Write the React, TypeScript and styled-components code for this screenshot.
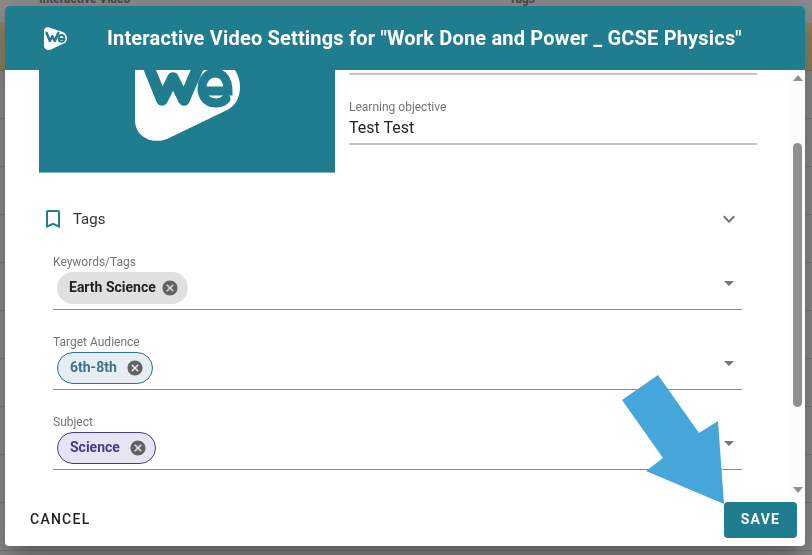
import React from "react";
import styled, { createGlobalStyle } from "styled-components";

const Global = createGlobalStyle`
  html, body { margin: 0; padding: 0; width: 812px; height: 555px; overflow: hidden; background: #8d8d8d; }
  * { box-sizing: border-box; }
  body { font-family: Roboto, "Liberation Sans", sans-serif; }
`;

const Page = styled.div`
  width: 812px;
  height: 555px;
  overflow: hidden;
  background: #8c8c8c;
`;
const PageHead = styled.div`
  display: flex;
  padding-left: 39px;
  font-size: 12px;
  font-weight: 700;
  color: #4a4a4a;
  line-height: 14px;
  margin-top: -8px;
  height: 31px;
`;
const HeadCell = styled.span<{ $w: number }>`
  width: ${(p) => p.$w}px;
`;
const Band = styled.div`
  height: 48px;
  background: #8e8364;
  border-bottom: 1px solid #7d7660;
`;
const PageRow = styled.div`
  height: 48px;
  border-bottom: 1px solid #7b7b7b;
`;

const Dialog = styled.div`
  position: fixed;
  left: 5px;
  top: 6px;
  width: 800px;
  height: 540px;
  display: flex;
  flex-direction: column;
  background: #fff;
  border-radius: 4px;
  overflow: hidden;
  box-shadow: 0 11px 15px -7px rgba(0,0,0,.2), 0 24px 38px 3px rgba(0,0,0,.14), 0 9px 46px 8px rgba(0,0,0,.12);
`;
const Header = styled.header`
  flex: 0 0 64px;
  display: flex;
  align-items: center;
  background: #1f7d8f;
  padding-left: 39px;
`;
const Title = styled.h2`
  margin: 0 0 0 40px;
  font-size: 20px;
  font-weight: 700;
  letter-spacing: 0.18px;
  line-height: 24px;
  color: #fff;
  white-space: nowrap;
`;
const Body = styled.div`
  flex: 0 0 427px;
  display: flex;
  min-height: 0;
`;
const Content = styled.div`
  flex: 1;
  overflow: hidden;
`;
const MediaRow = styled.div`
  display: flex;
  align-items: flex-start;
  padding-left: 34px;
  gap: 14px;
`;
const Poster = styled.div`
  flex: 0 0 296px;
  height: 167px;
  margin-top: -64px;
  display: flex;
  align-items: center;
  justify-content: center;
  background: #1f7d8f;
  border-bottom: 1px solid #79b3be;
  padding-bottom: 1px;
`;
const InfoColumn = styled.div`
  width: 408px;
  display: flex;
  flex-direction: column;
`;
const TopRule = styled.div`
  height: 5px;
  border-bottom: 2px solid #c4c4c4;
`;
const TextField = styled.div`
  margin-top: 25px;
  border-bottom: 2px solid #c4c4c4;
  padding-bottom: 3px;
`;
const FieldLabel = styled.div`
  font-size: 12px;
  line-height: 14px;
  color: #757575;
`;
const FieldValue = styled.div`
  font-size: 16px;
  line-height: 24px;
  margin-top: 2px;
  color: #222;
`;
const AccordionHead = styled.div`
  margin: 22px 0 0 36px;
  width: 700px;
  height: 48px;
  display: flex;
  align-items: center;
  color: #333;
  font-size: 15px;
`;
const AccordionText = styled.span`
  margin-left: 8px;
  flex: 1;
`;
const TagFields = styled.div`
  margin: 12px 0 0 48px;
  width: 689px;
  display: flex;
  flex-direction: column;
  gap: 25px;
`;
const SelectField = styled.div`
  position: relative;
  border-bottom: 1px solid #8a8a8a;
  padding-bottom: 5px;
`;
const ChipRow = styled.div`
  margin: 3px 0 0 4px;
  display: flex;
`;
const chipColors = {
  grey: { bg: "#e0e0e0", bd: "transparent", fg: "#222222", gap: 5, left: 11 },
  teal: { bg: "#e6eef3", bd: "#2f7186", fg: "#3f7288", gap: 9, left: 12 },
  purple: { bg: "#e7e5f3", bd: "#463a8c", fg: "#463a8c", gap: 9, left: 12 },
};
const Chip = styled.div<{ $tone: keyof typeof chipColors }>`
  height: 32px;
  display: flex;
  align-items: center;
  border-radius: 16px;
  padding: 0 8px 2px ${(p) => chipColors[p.$tone].left}px;
  font-size: 14px;
  font-weight: 700;
  white-space: nowrap;
  background: ${(p) => chipColors[p.$tone].bg};
  border: 1px solid ${(p) => chipColors[p.$tone].bd};
  color: ${(p) => chipColors[p.$tone].fg};
  svg {
    margin: 2px 0 0 ${(p) => chipColors[p.$tone].gap}px;
    flex: none;
  }
`;
const Caret = styled.svg`
  position: absolute;
  right: 1px;
  top: 16px;
`;
const ScrollTrack = styled.div`
  flex: 0 0 15px;
  display: flex;
  flex-direction: column;
  align-items: center;
  background: #fcfcfc;
  padding: 5px 0 4px;
`;
const ScrollUp = styled.div`
  width: 0;
  height: 0;
  border-left: 5px solid transparent;
  border-right: 5px solid transparent;
  border-bottom: 6px solid #8f8f8f;
`;
const ScrollDown = styled.div`
  margin-top: auto;
  width: 0;
  height: 0;
  border-left: 5px solid transparent;
  border-right: 5px solid transparent;
  border-top: 6px solid #8f8f8f;
`;
const ScrollThumb = styled.div`
  margin-top: 62px;
  width: 9px;
  height: 264px;
  background: #8f8f8f;
  border-radius: 5px;
`;
const Footer = styled.footer`
  flex: 1;
  display: flex;
  align-items: flex-start;
  justify-content: space-between;
  padding: 5px 8px 8px;
`;
const CancelButton = styled.button`
  height: 36px;
  padding: 0 17px 2px;
  border: 0;
  background: none;
  font-family: inherit;
  font-size: 14px;
  font-weight: 500;
  letter-spacing: 1.25px;
  color: #222;
`;
const SaveButton = styled.button`
  width: 73px;
  height: 36px;
  padding: 0 0 2px;
  border: 0;
  border-radius: 4px;
  background: #1f7d8f;
  font-family: inherit;
  font-size: 14px;
  font-weight: 700;
  letter-spacing: 1.25px;
  color: #fff;
`;
const Callout = styled.svg`
  position: fixed;
  left: 0;
  top: 0;
  pointer-events: none;
`;

const Logo = ({ size, bg, fg }: { size: number; bg: string; fg: string }) => (
  <svg width={size} height={size} viewBox="0 0 105 105">
    <path
      d="M0 16C0 4 12-2 24 2L86 23C98 27 105 39 105 51C105 62 100 71 90 75L32 103C16 109 0 100 0 84Z"
      fill={bg}
    />
    <path
      d="M12 27L27 64L38 42L49 64L65 27"
      fill="none"
      stroke={fg}
      strokeWidth="11.5"
      strokeLinecap="round"
      strokeLinejoin="round"
    />
    <path
      d="M67 55H93C93 44 88 37 80 37C72 37 67 44 67 52C67 61 72 67 81 67C85 67 88 66 91 63"
      fill="none"
      stroke={fg}
      strokeWidth="9"
      strokeLinecap="round"
    />
  </svg>
);

const ChipDelete = () => (
  <svg width="18" height="18" viewBox="0 0 24 24" fill="#616161">
    <path d="M12 2C6.47 2 2 6.47 2 12s4.47 10 10 10 10-4.47 10-10S17.53 2 12 2zm5 13.59L15.59 17 12 13.41 8.41 17 7 15.59 10.59 12 7 8.41 8.41 7 12 10.59 15.59 7 17 8.41 13.41 12 17 15.59z" />
  </svg>
);

const tagFields: { label: string; chip: string; tone: keyof typeof chipColors }[] = [
  { label: "Keywords/Tags", chip: "Earth Science", tone: "grey" },
  { label: "Target Audience", chip: "6th-8th", tone: "teal" },
  { label: "Subject", chip: "Science", tone: "purple" },
];

export default function App() {
  return (
    <>
      <Global />
      <Page>
        <PageHead>
          <HeadCell $w={470}>Interactive Video</HeadCell>
          <HeadCell $w={100}>Tags</HeadCell>
        </PageHead>
        <Band />
        {Array.from({ length: 10 }).map((_, i) => (
          <PageRow key={i} />
        ))}
      </Page>
      <Dialog>
        <Header>
          <Logo size={23} bg="#fff" fg="#1f7d8f" />
          <Title>Interactive Video Settings for "Work Done and Power _ GCSE Physics"</Title>
        </Header>
        <Body>
          <Content>
            <MediaRow>
              <Poster>
                <Logo size={105} bg="#fff" fg="#1f7d8f" />
              </Poster>
              <InfoColumn>
                <TopRule />
                <TextField>
                  <FieldLabel>Learning objective</FieldLabel>
                  <FieldValue>Test Test</FieldValue>
                </TextField>
              </InfoColumn>
            </MediaRow>
            <AccordionHead>
              <svg width="24" height="24" viewBox="0 0 24 24" fill="#1f7d8f">
                <path d="M17 3H7c-1.1 0-2 .9-2 2v16l7-3 7 3V5c0-1.1-.9-2-2-2zm0 15l-5-2.18L7 18V5h10v13z" />
              </svg>
              <AccordionText>Tags</AccordionText>
              <svg width="24" height="24" viewBox="0 0 24 24" fill="#757575">
                <path d="M16.59 8.59L12 13.17 7.41 8.59 6 10l6 6 6-6z" />
              </svg>
            </AccordionHead>
            <TagFields>
              {tagFields.map((f) => (
                <SelectField key={f.label}>
                  <FieldLabel>{f.label}</FieldLabel>
                  <ChipRow>
                    <Chip $tone={f.tone}>
                      {f.chip}
                      <ChipDelete />
                    </Chip>
                  </ChipRow>
                  <Caret width="24" height="24" viewBox="0 0 24 24" fill="#757575">
                    <path d="M7 10l5 5 5-5z" />
                  </Caret>
                </SelectField>
              ))}
            </TagFields>
          </Content>
          <ScrollTrack>
            <ScrollUp />
            <ScrollThumb />
            <ScrollDown />
          </ScrollTrack>
        </Body>
        <Footer>
          <CancelButton>CANCEL</CancelButton>
          <SaveButton>SAVE</SaveButton>
        </Footer>
      </Dialog>
      <Callout width="812" height="555" viewBox="0 0 812 555">
        <polygon points="658,375 622,400 663,458 646,471 724,504 718,421 699,433" fill="#45a6da" />
      </Callout>
    </>
  );
}
